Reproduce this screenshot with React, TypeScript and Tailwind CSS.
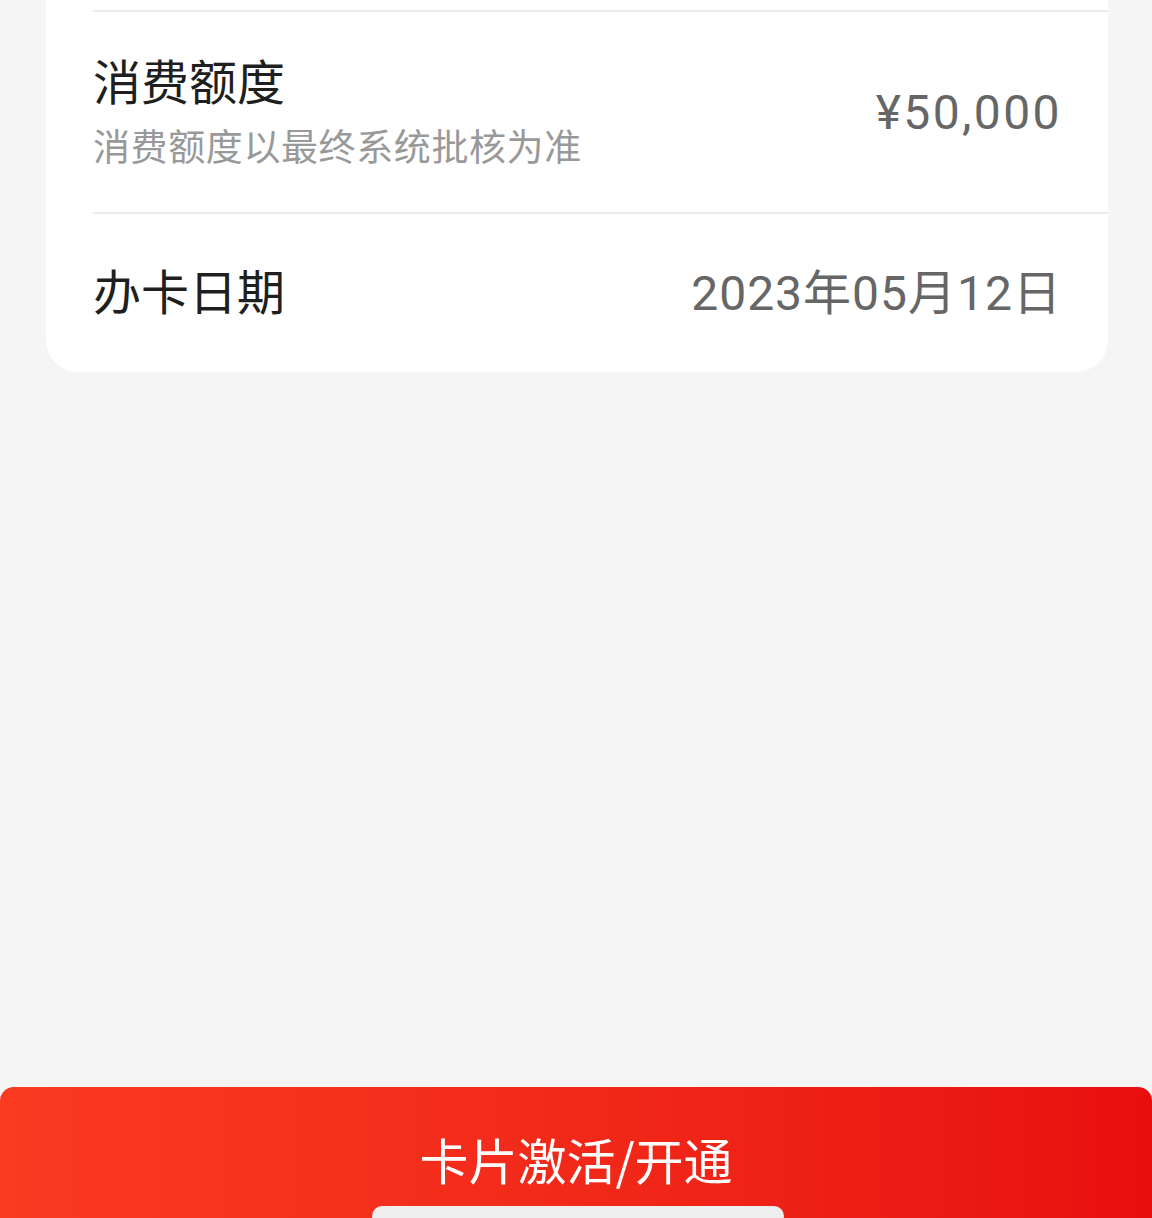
const font = { fontFamily: '"Noto Sans CJK SC", "Noto Sans", sans-serif' };
const numFont = { fontFamily: 'Roboto, "Noto Sans CJK SC", sans-serif' };

const App: React.FC = () => {
  return (
    <div
      className="relative flex h-[1218px] w-[1152px] flex-col overflow-hidden bg-[#f5f5f5]"
      style={font}
    >
      <div className="ml-[46px] mr-[44px] rounded-b-[32px] bg-white pl-[47px]">
        <div className="h-[10px]" />
        <div className="h-[2px] bg-[#ebebeb]" />
        <div className="flex h-[200px] items-center justify-between pb-[6px] pr-[46px]">
          <div className="flex flex-col">
            <span className="text-[48px] leading-[56px] text-[#1f1f1f]">消费额度</span>
            <span className="mt-[16px] text-[37px] leading-[44px] tracking-[0.6px] text-[#999999]">
              消费额度以最终系统批核为准
            </span>
          </div>
          <span
            className="mt-[8px] text-[48px] leading-[56px] tracking-[2.4px] text-[#666666]"
            style={numFont}
          >
            ¥50,000
          </span>
        </div>
        <div className="h-[2px] bg-[#ebebeb]" />
        <div className="flex h-[158px] items-center justify-between pb-[8px] pr-[46px]">
          <span className="text-[48px] leading-[56px] text-[#1f1f1f]">办卡日期</span>
          <span
            className="mt-[10px] text-[48px] leading-[56px] tracking-[1px] text-[#666666]"
            style={numFont}
          >
            2023年05月12日
          </span>
        </div>
      </div>

      <div className="flex-1" />

      <button className="flex h-[131px] w-full justify-center rounded-t-[14px] bg-gradient-to-r from-[#fb3a22] to-[#e80e0f] pt-[42px]">
        <span className="text-[49px] leading-[60px] text-white">卡片激活/开通</span>
      </button>

      <div className="absolute bottom-[-8px] left-[372px] h-[20px] w-[412px] rounded-full bg-[#eeeeee]" />
    </div>
  );
};

export default App;
